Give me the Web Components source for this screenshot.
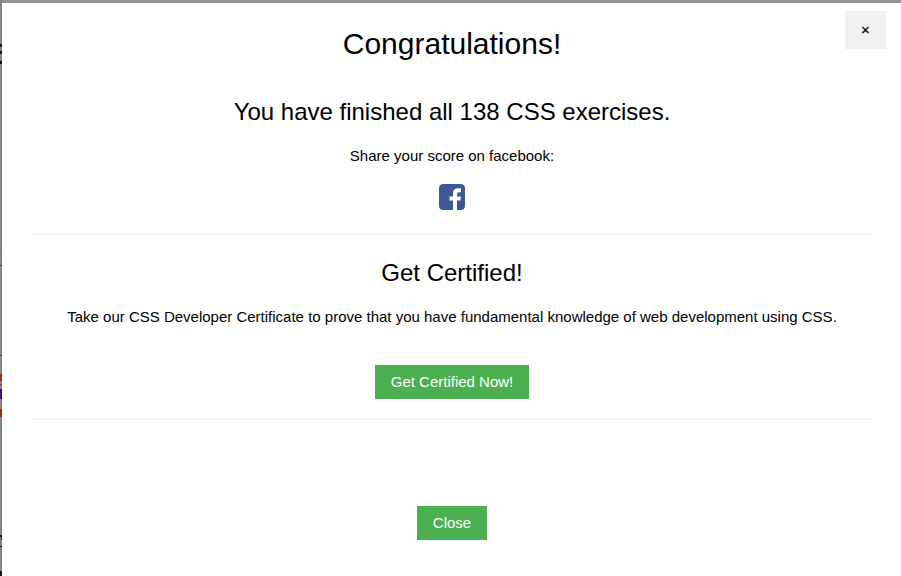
<!DOCTYPE html>
<html lang="en"><head><meta charset="utf-8"><title>Congratulations</title>
<style>html,body{margin:0;height:576px;overflow:hidden;background:#919191}</style></head>
<body><score-dialog>
<dialog-close slot="close">×</dialog-close>
<dialog-title slot="title">Congratulations!</dialog-title>
<score-share></score-share>
<certificate-offer></certificate-offer>
<action-button class="last">Close</action-button>
</score-dialog>
<script>
const define=(name,html)=>{
 const t=document.createElement('template');t.innerHTML=html;
 customElements.define(name,class extends HTMLElement{constructor(){super();this.attachShadow({mode:'open'}).append(t.content.cloneNode(true));}});
};
define('backdrop-edge',`<style>:host{display:block;position:absolute;left:0;top:0;width:2px;height:576px;overflow:hidden}svg{display:block}</style>
<svg width="2" height="576" shape-rendering="crispEdges"><rect width="2" height="576" fill="#858585"/><path d="M0 44h2v3H0zM0 51h2v3H0zM0 61h2v3H0z" fill="#0b0b10"/><path d="M0 47h2v4H0z" fill="#73819a"/><path d="M0 254h2v1H0z" fill="#707070"/><path d="M0 265h2v1H0zM0 355h2v1H0z" fill="#4b2416"/><path d="M0 374h2v7H0zM0 409h2v8H0z" fill="#a52a0a"/><path d="M0 384h2v1H0z" fill="#8a4a35"/><path d="M0 389h1v10H0z" fill="#4b1482"/><path d="M1 389h1v10H1z" fill="#1a0a8a"/><path d="M0 535h2v2H0zM0 546h2v1H0zM0 571h2v5H0z" fill="#20150e"/><path d="M1 537h1v3H1z" fill="#17243c"/></svg>`);
define('dialog-close',`<style>:host{display:block}button{width:41px;height:38px;padding:0;border:0;background:#f1f1f1;color:#000;font:15px/22.5px "Liberation Sans",sans-serif;-webkit-text-stroke:.25px #000}</style><button><slot></slot></button>`);
define('dialog-title',`<style>:host{display:block}h1{font-size:30px;font-weight:400;line-height:45px;margin:0;text-align:center}</style><h1><slot></slot></h1>`);
define('action-button',`<style>:host{display:block;width:fit-content}button{display:block;border:0;background:#4caf50;color:#fff;padding:6px 16px 5.5px;font:15px/22.5px "Liberation Sans",sans-serif}</style><button><slot></slot></button>`);
define('score-share',`<style>:host{display:flex;flex-direction:column;align-items:center;height:156px;border-bottom:1px solid #eee}h2{font-size:24px;font-weight:400;line-height:36px;margin:16px 0 0}p{margin:15px 0 0;line-height:22px}svg{margin-top:17px}</style>
<h2>You have finished all 138 CSS exercises.</h2><p>Share your score on facebook:</p><svg width="26" height="26" viewBox="0 0 26 26"><path fill="#3b5998" d="M4.500 0h17Q26 0 26 4.500v17Q26 26 21.500 26H18V16.500h3.400l.5-4H18V10.200Q18 8.300 20 8.300h2V4.200h-3Q14 4.200 14 9.300v3.200h-3.500v4H14V26H4.500Q0 26 0 21.500v-17Q0 0 4.500 0z"/></svg>`);
define('certificate-offer',`<style>:host{display:flex;flex-direction:column;align-items:center;height:184px;border-bottom:1px solid #eee}h2{font-size:24px;font-weight:400;line-height:36px;margin:20px 0 0}p{margin:15px 0 0;line-height:22px}action-button{margin-top:37px}</style>
<h2>Get Certified!</h2><p>Take our CSS Developer Certificate to prove that you have fundamental knowledge of web development using CSS.</p><action-button>Get Certified Now!</action-button>`);
define('score-dialog',`<style>:host{display:block;position:relative;box-sizing:border-box;height:576px;padding:3px 0 0 2px;font:15px/22.5px "Liberation Sans",sans-serif;color:#000}main{background:#fff;height:573px;box-sizing:border-box;padding:18px 31px 0 32px}slot[name=close]{display:block;position:absolute;top:11px;right:15px}slot[name=title]{display:block;margin-bottom:12px}::slotted(.last){margin:86px auto 0}</style>
<backdrop-edge></backdrop-edge><main><slot name="close"></slot><slot name="title"></slot><slot></slot></main>`);
</script></body></html>
